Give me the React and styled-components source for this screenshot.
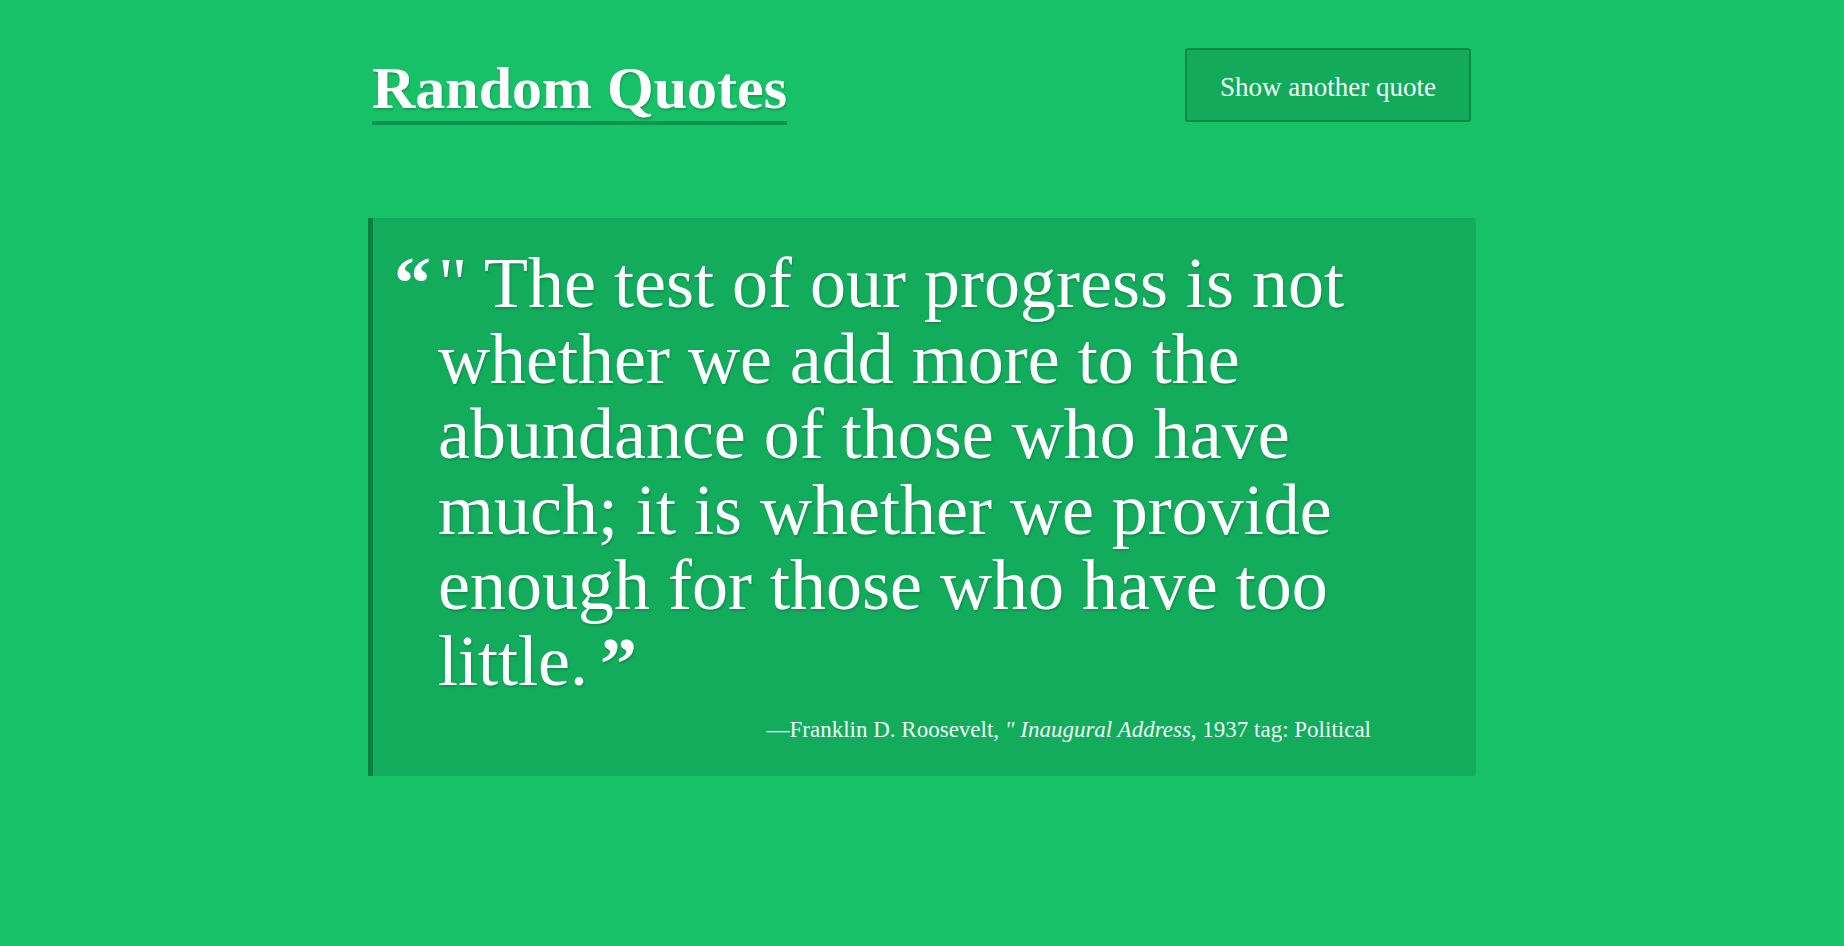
import React from 'react';
import styled, { createGlobalStyle } from 'styled-components';

// Global

const GlobalStyle = createGlobalStyle`
  html, body {
    margin: 0;
    padding: 0;
    background: #17c168;
    font-family: "Liberation Serif", "Times New Roman", serif;
    color: #fff;
  }
`

// Styled Components

const Page = styled.div`
  width: 1108px;
  margin: 0 auto;
  padding-top: 48px;
`

const Header = styled.header`
  display: flex;
  justify-content: space-between;
  align-items: flex-start;
  padding: 0 5px 0 4px;
`

const Title = styled.h1`
  margin: 7px 0 0;
  font-size: 60px;
  line-height: 66px;
  font-weight: 700;
  border-bottom: 4px solid #0f9550;
  text-shadow: 1px 2px 2px rgba(0, 0, 0, 0.18);
`

const NextButton = styled.button`
  width: 286px;
  height: 74px;
  background: #13aa5c;
  border: 2px solid #0c8a45;
  border-radius: 3px;
  color: #f4fff8;
  font-family: inherit;
  font-size: 27px;
  padding: 4px 0 0;
  cursor: pointer;

  &:hover {
    background: #109d54;
    transition: all 200ms ease;
  }
`

const Card = styled.article`
  margin-top: 93px;
  background: #12ac5c;
  border-left: 5px solid #0b7f3f;
  border-radius: 0 3px 3px 0;
  padding: 28px 0 31px 21px;
`

const QuoteRow = styled.div`
  display: flex;
  align-items: flex-start;
`

const QuoteMark = styled.span`
  flex: 0 0 44px;
  font-size: 74px;
  font-weight: 700;
  line-height: 72px;
  height: 50px;
  margin-top: 1px;
`

const QuoteText = styled.p`
  margin: 0;
  font-size: 72px;
  line-height: 75.6px;
  font-weight: 400;
  text-shadow: 1px 2px 2px rgba(0, 0, 0, 0.16);
`

const CloseMark = styled.span`
  font-size: 74px;
  font-weight: 700;
  line-height: 0;
  position: relative;
  top: 4px;
  margin-left: 12px;
`

const Attribution = styled.footer`
  margin-top: 15px;
  padding-right: 105px;
  text-align: right;
  font-size: 23px;
  line-height: 30px;
  color: #f1fbf5;

  cite {
    font-style: italic;
  }
`

const lines = [
  '" The test of our progress is not',
  'whether we add more to the',
  'abundance of those who have',
  'much; it is whether we provide',
  'enough for those who have too',
  'little.',
];

// App Component

export default function App() {
  return (
    <>
      <GlobalStyle />
      <Page>
        <Header>
          <Title>Random Quotes</Title>
          <NextButton>Show another quote</NextButton>
        </Header>
        <Card>
          <QuoteRow>
            <QuoteMark>“</QuoteMark>
            <QuoteText>
              {lines.map((line, i) => (
                <React.Fragment key={i}>
                  {line}
                  {i < lines.length - 1 ? <br /> : <CloseMark>”</CloseMark>}
                </React.Fragment>
              ))}
            </QuoteText>
          </QuoteRow>
          <Attribution>
            —Franklin D. Roosevelt, <cite>" Inaugural Address</cite>, 1937 tag: Political
          </Attribution>
        </Card>
      </Page>
    </>
  );
}
